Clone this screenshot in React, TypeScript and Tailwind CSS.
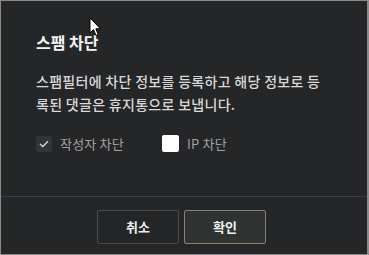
import React from "react";

export default function App() {
  const font = { fontFamily: '"Noto Sans CJK KR", "Noto Sans", sans-serif' };
  return (
    <div className="relative h-[255px] w-[369px] overflow-hidden bg-[#8a8a8a] pl-px pt-px pr-[2px] pb-px" style={font}>
      <div className="flex h-full w-full flex-col bg-[#252628]">
        <div className="px-[35px] pt-[30px]">
          <h1 className="text-[16px] font-bold leading-[22px] text-[#f2f2f2]">스팸 차단</h1>
          <p className="mt-[17px] text-[14px] font-medium leading-[23px] tracking-[0.3px] text-[#d9d9d9]">
            <span className="block whitespace-nowrap">스팸필터에 차단 정보를 등록하고 해당 정보로 등</span>
            <span className="block whitespace-nowrap">록된 댓글은 휴지통으로 보냅니다.</span>
          </p>
          <div className="mt-[18px] flex items-center text-[13px] tracking-[0.2px] text-[#a3a3a3]">
            <span className="flex h-[16px] w-[16px] items-center justify-center rounded-[2px] bg-[#333437]">
              <svg width="10" height="8" viewBox="0 0 10 8" fill="none">
                <path d="M1 4 L3.8 6.6 L9 1.2" stroke="#d4d4d4" strokeWidth="1.4" />
              </svg>
            </span>
            <span className="ml-[8px]">작성자 차단</span>
            <span className="ml-[38px] h-[17px] w-[17px] rounded-[2px] bg-white" />
            <span className="ml-[8px]">IP 차단</span>
          </div>
        </div>
        <div className="mt-auto h-[58px] border-t border-[#3e3f42] pt-[13px]">
          <div className="flex gap-[5px] pl-[96px]">
            <button className="h-[34px] w-[82px] rounded-[2px] border border-[#4a4b4d] bg-[#242527] text-[13px] font-bold text-[#ececec]">
              취소
            </button>
            <button className="h-[34px] w-[82px] rounded-[2px] border border-[#8d816e] bg-[#2f3433] text-[13px] font-bold text-[#f2f2f2]">
              확인
            </button>
          </div>
        </div>
      </div>
      <svg className="absolute left-[89px] top-[17px]" width="13" height="20" viewBox="0 0 13 20">
        <path d="M1 1 L1 16 L4.5 12.5 L7 18.5 L9.3 17.5 L6.8 11.8 L11.5 11.8 Z" fill="#ffffff" stroke="#000000" strokeWidth="1" strokeLinejoin="round" />
      </svg>
    </div>
  );
}
